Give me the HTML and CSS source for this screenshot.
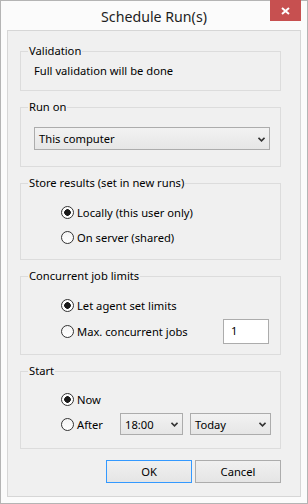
FILE: index.html
```
<!DOCTYPE html>
<html lang="en">
<head>
  <meta charset="UTF-8" />
  <title>Schedule Run(s)</title>
  <link rel="stylesheet" href="styles.css">
</head>
<body>

  <div class="window">
    <div class="titlebar">
      <span class="title">Schedule Run(s)</span>
      <button class="close" title="Close">
        <svg width="9" height="8" viewBox="0 0 9 8"><path d="M1 1 L8 7 M8 1 L1 7" stroke="#fff" stroke-width="2"/></svg>
      </button>
    </div>

    <div class="client">

      <div class="group group-validation">
        <div class="group-title">Validation</div>
        <div class="info">Full validation will be done</div>
      </div>

      <div class="group group-runon">
        <div class="group-title">Run on</div>
        <div class="select select-wide">
          <span>This computer</span>
          <svg class="chevron" width="7" height="5" viewBox="0 0 7 5"><path d="M0.5 0.8 L3.5 3.8 L6.5 0.8" fill="none" stroke="#333" stroke-width="1.6"/></svg>
        </div>
      </div>

      <div class="group group-store">
        <div class="group-title">Store results (set in new runs)</div>
        <label class="row row-first"><input type="radio" name="store" checked> Locally (this user only)</label>
        <label class="row"><input type="radio" name="store"> On server (shared)</label>
      </div>

      <div class="group group-jobs">
        <div class="group-title">Concurrent job limits</div>
        <label class="row row-first"><input type="radio" name="jobs" checked> Let agent set limits</label>
        <div class="row row-tall">
          <label class="row-label"><input type="radio" name="jobs"> Max. concurrent jobs</label>
          <input class="count" type="text" value="1">
        </div>
      </div>

      <div class="group group-start">
        <div class="group-title">Start</div>
        <label class="row row-first"><input type="radio" name="start" checked> Now</label>
        <div class="row">
          <label class="row-label"><input type="radio" name="start"> After</label>
          <div class="when">
            <div class="select select-time">
              <span>18:00</span>
              <svg class="chevron" width="7" height="5" viewBox="0 0 7 5"><path d="M0.5 0.8 L3.5 3.8 L6.5 0.8" fill="none" stroke="#333" stroke-width="1.6"/></svg>
            </div>
            <div class="select select-day">
              <span>Today</span>
              <svg class="chevron" width="7" height="5" viewBox="0 0 7 5"><path d="M0.5 0.8 L3.5 3.8 L6.5 0.8" fill="none" stroke="#333" stroke-width="1.6"/></svg>
            </div>
          </div>
        </div>
      </div>

      <div class="buttons">
        <button class="btn btn-default">OK</button>
        <button class="btn">Cancel</button>
      </div>

    </div>
  </div>

</body>
</html>
```

FILE: styles.css
```
body {
  margin: 0;
  font-family: 'Noto Sans', 'Open Sans', sans-serif;
  font-size: 11.2px;
  color: #000;
  background: #fff;
}

.window {
  width: 308px;
  height: 504px;
  box-sizing: border-box;
  border: 1px solid #b4b4b4;
  background: #fbfbfb;
  display: flex;
  flex-direction: column;
}

.titlebar {
  position: relative;
  height: 29px;
  display: flex;
  align-items: center;
  justify-content: center;
}

.title {
  font-size: 14.2px;
  color: #1e1e1e;
  margin-top: 1px;
}

.close {
  position: absolute;
  top: -1px;
  right: 6px;
  width: 31px;
  height: 21px;
  border: none;
  padding: 0;
  background: #c75050;
  display: flex;
  align-items: center;
  justify-content: center;
}

.client {
  flex: 1;
  margin: 0 6px 6px 6px;
  border: 1px solid #d6d6d6;
  background: #f0f0f0;
  padding: 20px 19px 0 12px;
  display: flex;
  flex-direction: column;
  gap: 16px;
}

.group {
  border: 1px solid #dcdcdc;
  box-sizing: border-box;
  display: flex;
  flex-direction: column;
}

.group-validation { height: 40px; }
.group-runon { height: 60px; }
.group-store { height: 77px; }
.group-jobs { height: 79px; }
.group-start { height: 78px; }

.group-title {
  align-self: flex-start;
  margin: -9px 0 0 7px;
  padding: 0 1px;
  line-height: 16px;
  background: #f0f0f0;
}

.info {
  margin: 4px 0 0 13px;
  line-height: 16px;
}

/* combo boxes */
.select {
  box-sizing: border-box;
  height: 23px;
  border: 1px solid #acacac;
  background: linear-gradient(#f2f2f2, #e6e6e6);
  display: flex;
  align-items: center;
  justify-content: space-between;
  padding: 0 4px 0 4px;
}

.select-wide {
  width: 236px;
  margin: 12px 0 0 13px;
}

.select-time {
  width: 63px;
  height: 22px;
}

.select-day {
  width: 81px;
  height: 22px;
}

.chevron {
  margin-top: 1px;
}

/* radio rows */
.row {
  display: flex;
  align-items: center;
  height: 22px;
  margin: 3px 0 0 40px;
}

.row-first {
  margin-top: 10px;
}

.group-start .row-first {
  margin-top: 9px;
}

.row-tall {
  height: 25px;
  padding-right: 11px;
}

.row-label {
  display: flex;
  align-items: center;
}

input[type="radio"] {
  appearance: none;
  width: 13px;
  height: 13px;
  margin: 0 3px 0 0;
  border: 1px solid #333;
  border-radius: 50%;
  background: linear-gradient(#f4f4f4, #fff);
}

input[type="radio"]:checked {
  background: radial-gradient(circle, #1a1a1a 0 3px, #fff 3.6px);
}

.count {
  margin-left: auto;
  box-sizing: border-box;
  width: 46px;
  height: 25px;
  border: 1px solid #acacac;
  background: #fff;
  font: inherit;
  padding: 0 0 2px 7px;
  outline: none;
}

.when {
  margin-left: auto;
  margin-right: 9px;
  display: flex;
  gap: 7px;
}

/* dialog buttons */
.buttons {
  margin-top: -5px;
  display: flex;
  justify-content: flex-end;
  gap: 3px;
}

.btn {
  width: 86px;
  height: 23px;
  border: 1px solid #acacac;
  background: linear-gradient(#f0f0f0, #e5e5e5);
  font: inherit;
  color: #000;
  padding: 0;
}

.btn-default {
  border-color: #3399ff;
}
```
